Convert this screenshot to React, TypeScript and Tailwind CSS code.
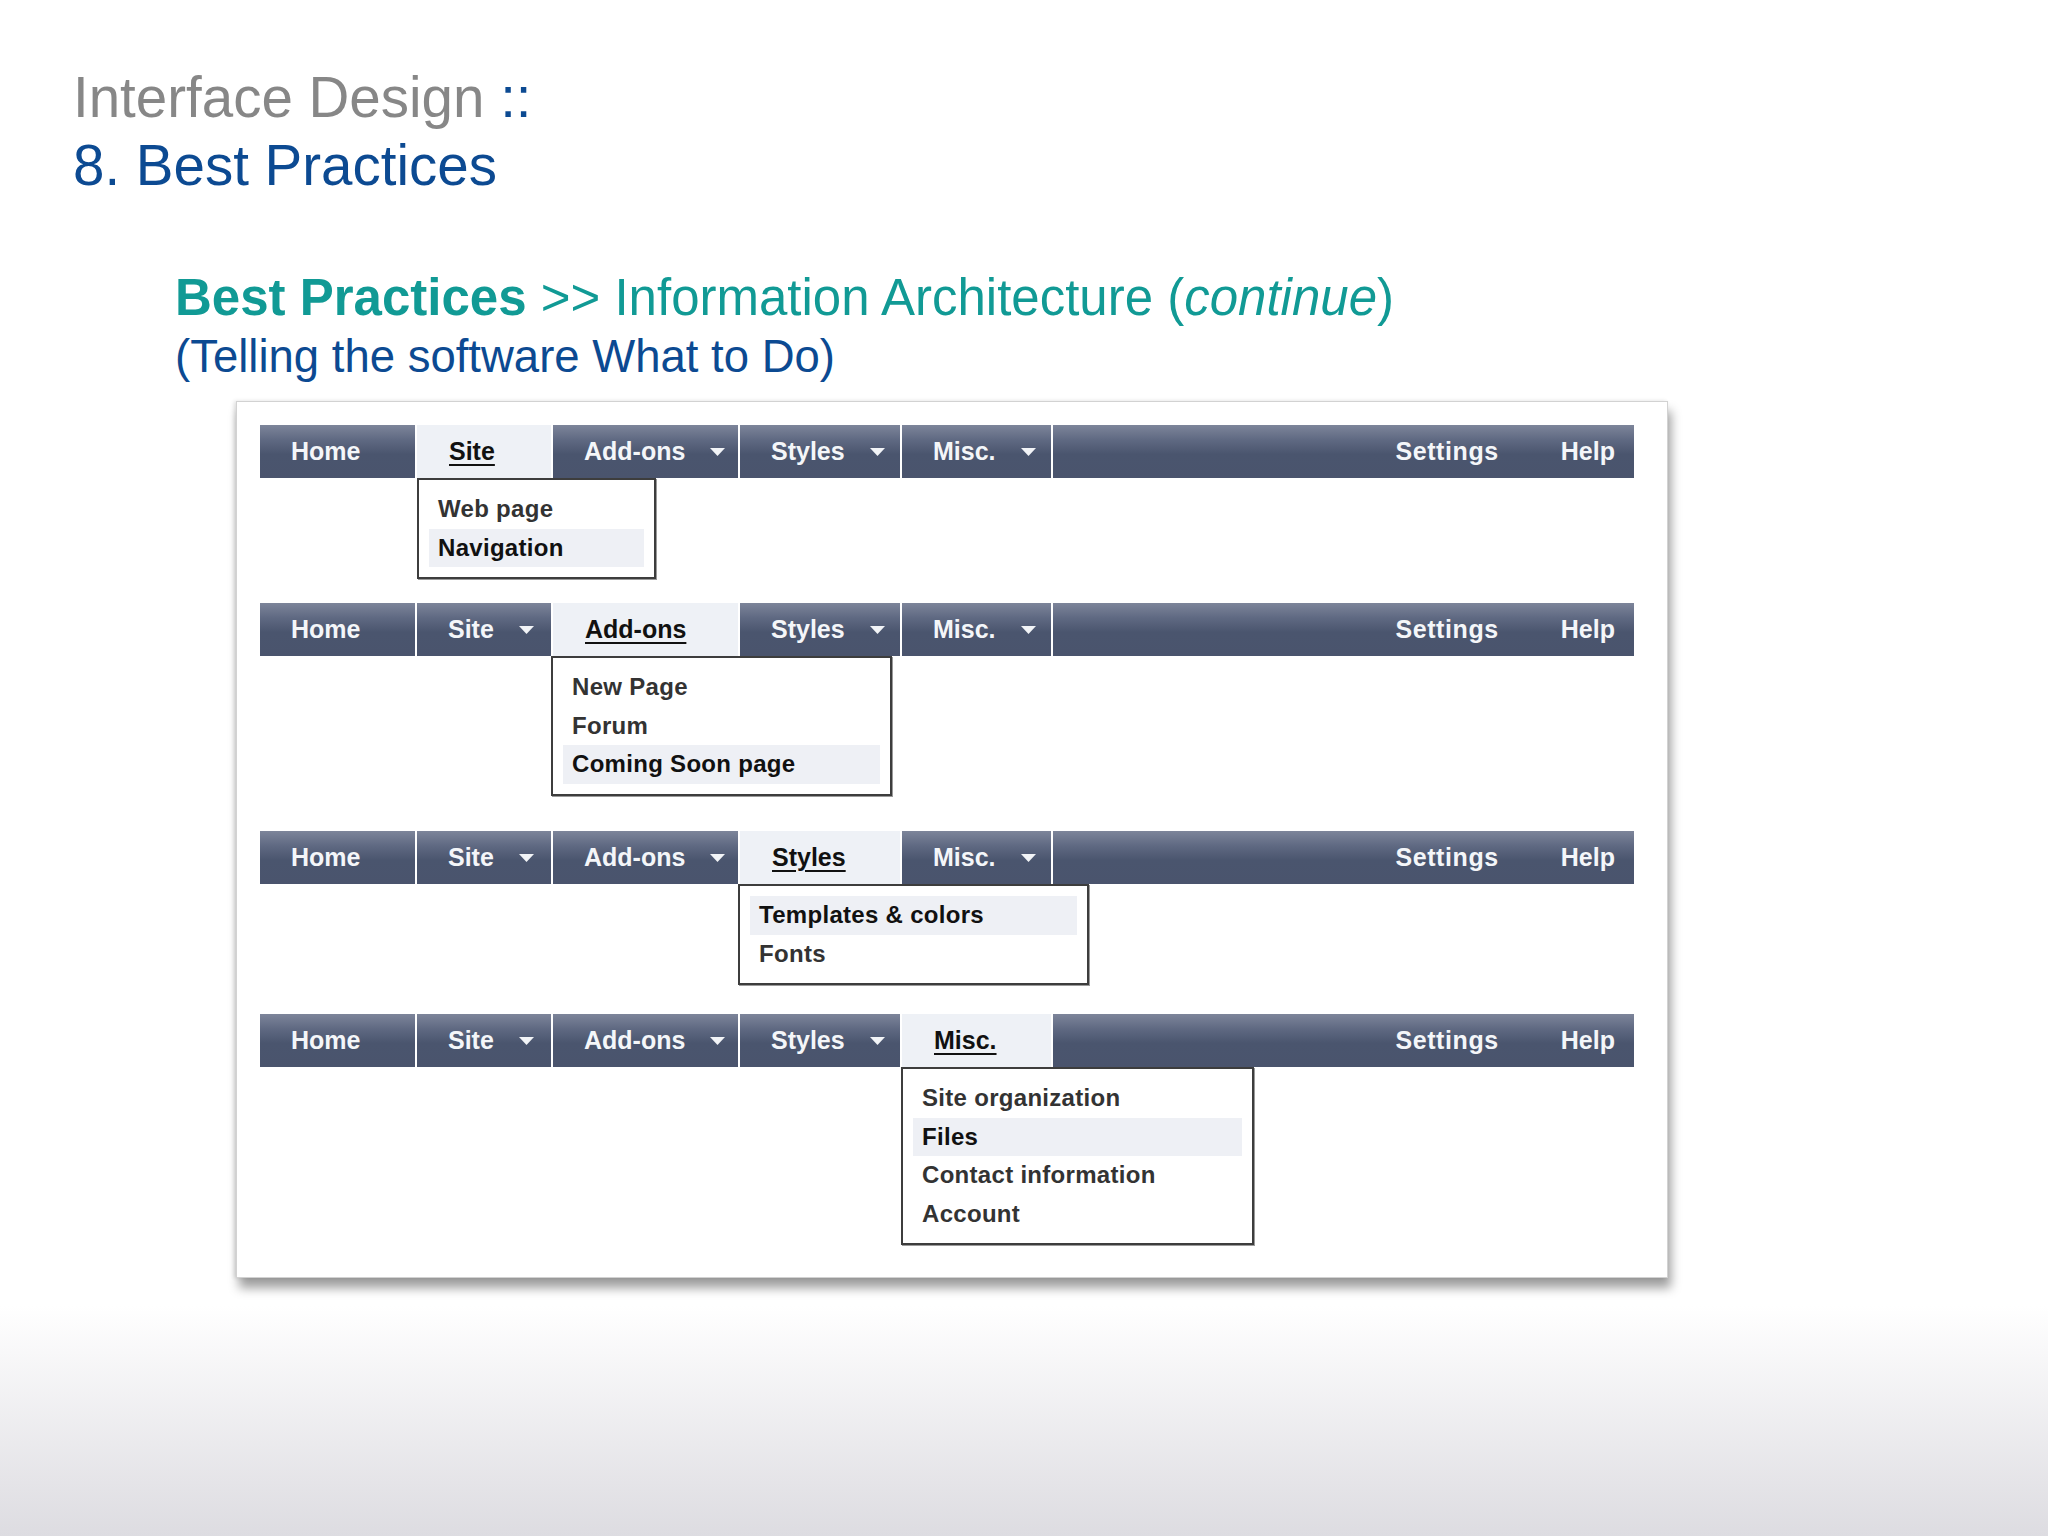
type Cell = { label: string; width: number; menu?: boolean };

const cells: Cell[] = [
  { label: "Home", width: 155 },
  { label: "Site", width: 134, menu: true },
  { label: "Add-ons", width: 185, menu: true },
  { label: "Styles", width: 160, menu: true },
  { label: "Misc.", width: 149, menu: true },
];

interface Section {
  active: number;
  items: string[];
  highlight: number;
  offset: number;
  menuWidth: number;
  height?: number;
}

const sections: Section[] = [
  { active: 1, items: ["Web page", "Navigation"], highlight: 1, offset: 157, menuWidth: 239, height: 178 },
  { active: 2, items: ["New Page", "Forum", "Coming Soon page"], highlight: 2, offset: 291, menuWidth: 341, height: 228 },
  { active: 3, items: ["Templates & colors", "Fonts"], highlight: 0, offset: 478, menuWidth: 351, height: 183 },
  { active: 4, items: ["Site organization", "Files", "Contact information", "Account"], highlight: 1, offset: 641, menuWidth: 353 },
];

const barBg =
  "bg-[linear-gradient(to_bottom,#7d859a_0%,#5f6982_28%,#4a556e_55%,#4a546d_100%)]";

function Arrow() {
  return (
    <svg width="17" height="10" viewBox="0 0 17 10" className="ml-[24px] shrink-0">
      <polygon points="1,1 16,1 8.5,9" fill="#f2f4f7" />
    </svg>
  );
}

function NavBar({ active }: { active: number }) {
  return (
    <div className="flex h-[53px] w-[1374px] gap-[2px]">
      {cells.map((c, i) =>
        i === active ? (
          <div
            key={c.label}
            className="flex h-full items-center bg-[#eef1f6] pl-[32px]"
            style={{ width: c.width }}
          >
            <span className="text-[25px] font-bold text-[#111] underline decoration-2 underline-offset-[4px]">
              {c.label}
            </span>
          </div>
        ) : (
          <div
            key={c.label}
            className={`flex h-full items-center pl-[31px] ${barBg}`}
            style={{ width: c.width }}
          >
            <span className="text-[25px] font-bold text-[#f4f6f9]">{c.label}</span>
            {c.menu && <Arrow />}
          </div>
        )
      )}
      <div className={`flex h-full flex-1 items-center justify-end gap-[62px] pr-[19px] ${barBg}`}>
        <span className="text-[25px] font-bold tracking-[0.6px] text-[#f4f6f9]">Settings</span>
        <span className="text-[25px] font-bold text-[#f4f6f9]">Help</span>
      </div>
    </div>
  );
}

function Dropdown({ s }: { s: Section }) {
  return (
    <div
      className="border-2 border-[#3d3d3d] bg-white px-[10px] pt-[10px] pb-[10px] shadow-[1px_1px_0_#9a9a9a]"
      style={{ marginLeft: s.offset, width: s.menuWidth }}
    >
      {s.items.map((it, i) => (
        <div
          key={it}
          className={`flex h-[38.5px] items-center px-[9px] text-[24px] font-bold tracking-[0.3px] ${
            i === s.highlight ? "bg-[#eef0f5] text-[#111]" : "text-[#333]"
          }`}
        >
          {it}
        </div>
      ))}
    </div>
  );
}

export default function App() {
  return (
    <div className="h-[1536px] w-[2048px] overflow-hidden bg-[linear-gradient(to_bottom,#ffffff_0%,#ffffff_85%,#dddce1_100%)] font-['Liberation_Sans',Arial,sans-serif]">
      <div className="pl-[73px] pt-[64px] text-[56.5px] leading-[68px]">
        <div className="text-[#878787]">
          Interface Design <span className="text-[#0c4a92]">::</span>
        </div>
        <div className="text-[#0c4a92]">8. Best Practices</div>
      </div>

      <div className="mt-[69px] pl-[175px]">
        <div className="text-[51px] leading-[58px] text-[#119a95]">
          <span className="font-bold">Best Practices</span> &gt;&gt; Information Architecture (
          <span className="italic">continue</span>)
        </div>
        <div className="mt-[4px] text-[45.5px] leading-[52px] text-[#0c4a92]">
          (Telling the software What to Do)
        </div>
      </div>

      <div className="ml-[236px] mt-[18px] h-[877px] w-[1432px] border border-[#d2d2d2] bg-white pl-[23px] pt-[23px] shadow-[3px_10px_10px_rgba(0,0,0,0.38),-2px_0_4px_rgba(0,0,0,0.12)]">
        {sections.map((s, idx) => (
          <div
            key={idx}
            className="flex flex-col"
            style={s.height ? { height: s.height } : undefined}
          >
            <NavBar active={s.active} />
            <Dropdown s={s} />
          </div>
        ))}
      </div>
    </div>
  );
}
